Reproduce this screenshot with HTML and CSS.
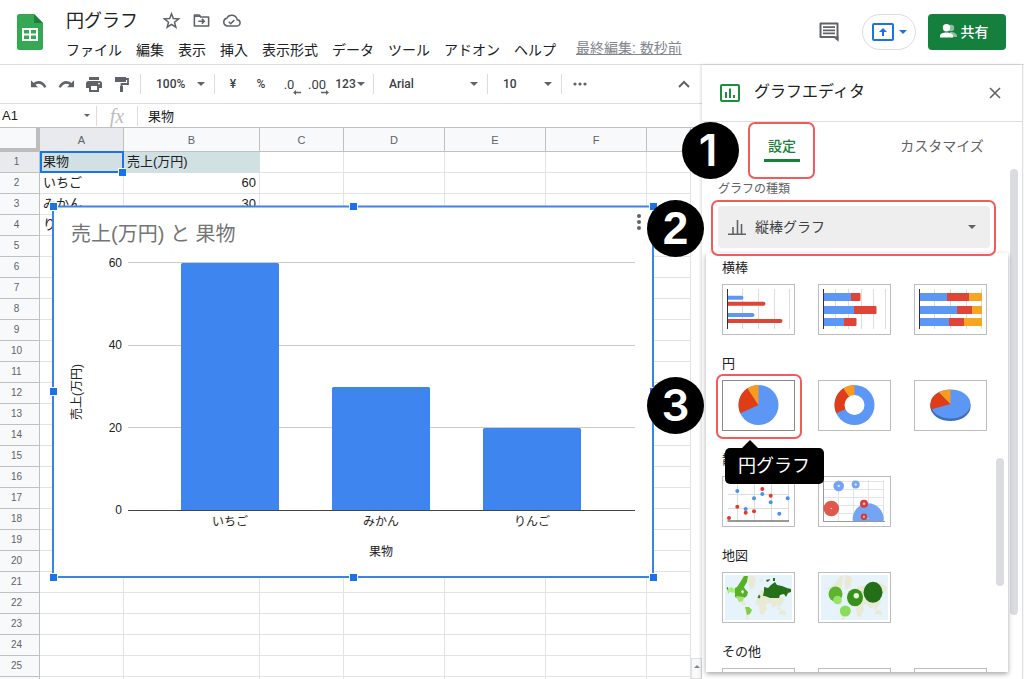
FILE: index.html
```html
<!DOCTYPE html>
<html lang="ja">
<head>
<meta charset="utf-8">
<title>円グラフ</title>
<meta name="viewport" content="width=device-width, initial-scale=1">
<link rel="stylesheet" href="styles.css">
</head>
<body>
<header class="app-header">
  <svg class="logo" viewBox="0 0 26 36" width="26" height="36" aria-hidden="true">
    <path d="M2.500 0H17l9 9v24.500a2.500 2.500 0 0 1-2.500 2.500h-21A2.500 2.500 0 0 1 0 33.500v-31A2.500 2.500 0 0 1 2.500 0z" fill="#34a853"/>
    <path d="M17 0l9 9h-9z" fill="#188038"/>
    <path d="M5 14h16v13H5z" fill="#fff"/>
    <path d="M7 16h5v3.500H7zM14 16h5v3.500h-5zM7 21.500h5V25H7zM14 21.500h5V25h-5z" fill="#34a853"/>
  </svg>
  <div class="doc">
    <div class="doc-top">
      <h1 class="doc-title">円グラフ</h1>
      <button class="icon-btn" aria-label="スター"><svg viewBox="0 0 24 24" width="19" height="19"><path d="M12 3.500l2.300 6 6.700.4-5.200 4.200 1.700 6.400L12 16.900l-5.500 3.600 1.700-6.400L3 9.900l6.700-.4z" fill="none" stroke="#5f6368" stroke-width="1.900" stroke-linejoin="miter"/></svg></button>
      <button class="icon-btn" aria-label="移動"><svg viewBox="0 0 24 24" width="19" height="19" fill="none" stroke="#5f6368" stroke-width="2"><path d="M3 5h6l2 2.500h10V19H3z" stroke-linejoin="round"/><path d="M3 6.500h8" /><path d="M8 13h7M12.500 10l3 3-3 3"/></svg></button>
      <button class="icon-btn" aria-label="保存状態"><svg viewBox="0 0 24 24" width="19" height="19" fill="none" stroke="#5f6368" stroke-width="1.900"><path d="M6.500 19h12a4 4 0 0 0 .6-8A7 7 0 0 0 6 9.200 5 5 0 0 0 6.500 19z"/><path d="M8.500 13.500l2.500 2.500 4.500-4.500"/></svg></button>
    </div>
    <nav class="menus">
      <button>ファイル</button><button>編集</button><button>表示</button><button>挿入</button><button>表示形式</button><button>データ</button><button>ツール</button><button>アドオン</button><button>ヘルプ</button>
      <a class="last-edit" href="#">最終編集: 数秒前</a>
    </nav>
  </div>
  <div class="header-actions">
    <button class="comment-btn" aria-label="コメント"><svg viewBox="0 0 20 20" width="20" height="20"><path d="M1.500 1.500h17v16l-3-2.500h-14z" fill="none" stroke="#5f6368" stroke-width="2" stroke-linejoin="round"/><path d="M15 14.500h4.500V20z" fill="#5f6368"/><path d="M4 5.200h12M4 8.300h12M4 11.400h12" stroke="#5f6368" stroke-width="1.800"/></svg></button>
    <button class="present-btn caret" aria-label="画面共有"><svg viewBox="0 0 22 18" width="22" height="18"><rect x="1" y="1" width="20" height="16" rx="1" fill="none" stroke="#1a73e8" stroke-width="2"/><path d="M11 5l4 4h-3v4h-2V9H7z" fill="#1a73e8"/></svg></button>
    <button class="share-btn"><svg viewBox="0 0 17 14" width="17" height="14"><g fill="#8bc29e"><circle cx="11" cy="4" r="3.200"/><path d="M10 8c4 0 7 1.500 7 4v1h-6z"/></g><g fill="#fff"><circle cx="6.500" cy="3.700" r="3.700"/><path d="M0 13.500v-1.800C0 9.500 3.500 8.500 6.500 8.500s6.500 1 6.500 3.200v1.800z"/></g></svg>共有</button>
  </div>
</header>

<main class="workspace">
  <section class="editor">
    <div class="toolbar">
      <button class="tool" aria-label="元に戻す"><svg viewBox="0 0 18 12" width="17" height="12"><path d="M1 2v7.500h7.500L5.800 6.800C8.500 4.800 12.800 5.500 15 10l2.400-.9C14.500 2.500 8 1.200 4 5z" fill="#5f6368"/></svg></button>
      <button class="tool" aria-label="やり直し"><svg viewBox="0 0 18 12" width="17" height="12"><path d="M17 2v7.500H9.500l2.700-2.700C9.500 4.800 5.200 5.500 3 10L.6 9.100C3.500 2.500 10 1.200 14 5z" fill="#5f6368"/></svg></button>
      <button class="tool" aria-label="印刷"><svg viewBox="0 0 16 15" width="16" height="15" fill="#5f6368"><path d="M3 0h10v3H3z"/><path fill-rule="evenodd" d="M2.500 4h11A2.500 2.500 0 0 1 16 6.500V11h-3v4H3v-4H0V6.500A2.500 2.500 0 0 1 2.500 4zM5 9v4h6V9zM13 5.700a.9.9 0 1 0 0 1.800.9.9 0 0 0 0-1.800z"/></svg></button>
      <button class="tool" aria-label="書式を貼り付け"><svg viewBox="0 0 14 15" width="14" height="15"><path d="M0 0h11v5H0z" fill="#5f6368"/><path d="M11 2h2v5H6.500v3" fill="none" stroke="#5f6368" stroke-width="1.800"/><path d="M5 9h3v6H5z" fill="#5f6368"/></svg></button>
      <span class="sep"></span>
      <label class="pick pick-narrow caret"><select aria-label="ズーム"><option>100%</option></select></label>
      <span class="sep"></span>
      <button class="tool">¥</button>
      <button class="tool">%</button>
      <button class="tool tool-dec" aria-label="小数点以下の桁数を減らす">.0<svg class="dec-arrow" viewBox="0 0 8 5" width="8" height="5"><path d="M3 0v1.800h5v1.400H3V5L0 2.500z" fill="#5f6368"/></svg></button>
      <button class="tool tool-dec" aria-label="小数点以下の桁数を増やす">.00<svg class="dec-arrow" viewBox="0 0 8 5" width="8" height="5"><path d="M5 0v1.800H0v1.400h5V5l3-2.500z" fill="#5f6368"/></svg></button>
      <button class="tool tool-format caret">123</button>
      <span class="sep"></span>
      <label class="pick pick-wide caret"><select aria-label="フォント"><option>Arial</option></select></label>
      <span class="sep"></span>
      <label class="pick pick-narrow caret"><select aria-label="フォントサイズ"><option>10</option></select></label>
      <span class="sep"></span>
      <button class="tool" aria-label="その他"><svg viewBox="0 0 14 4" width="14" height="4" fill="#5f6368"><circle cx="2" cy="2" r="1.600"/><circle cx="7" cy="2" r="1.600"/><circle cx="12" cy="2" r="1.600"/></svg></button>
      <button class="tool tool-end" aria-label="メニューを非表示"><svg viewBox="0 0 12 8" width="12" height="8"><path d="M1 7l5-5 5 5" fill="none" stroke="#5f6368" stroke-width="2"/></svg></button>
    </div>

    <div class="formula-bar">
      <label class="name-box caret"><input type="text" value="A1" aria-label="名前ボックス"></label>
      <span class="fx">fx</span>
      <input class="formula" type="text" value="果物" aria-label="数式">
    </div>

    <div class="sheet">
      <div class="grid-wrap">
        <table class="grid">
          <colgroup><col class="c-num"><col class="c-s"><col class="c-b"><col class="c-s"><col class="c-m"><col class="c-m"><col class="c-m"><col></colgroup>
          <thead><tr><th class="corner"></th><th class="on">A</th><th>B</th><th>C</th><th>D</th><th>E</th><th>F</th><th></th></tr></thead>
          <tbody>
            <tr><th class="on">1</th><td class="head active">果物</td><td class="head">売上(万円)</td><td></td><td></td><td></td><td></td><td></td></tr>
            <tr><th>2</th><td>いちご</td><td class="num">60</td><td></td><td></td><td></td><td></td><td></td></tr>
            <tr><th>3</th><td>みかん</td><td class="num">30</td><td></td><td></td><td></td><td></td><td></td></tr>
            <tr><th>4</th><td>りんご</td><td class="num">20</td><td></td><td></td><td></td><td></td><td></td></tr>
            <tr><th>5</th><td></td><td></td><td></td><td></td><td></td><td></td><td></td></tr>
            <tr><th>6</th><td></td><td></td><td></td><td></td><td></td><td></td><td></td></tr>
            <tr><th>7</th><td></td><td></td><td></td><td></td><td></td><td></td><td></td></tr>
            <tr><th>8</th><td></td><td></td><td></td><td></td><td></td><td></td><td></td></tr>
            <tr><th>9</th><td></td><td></td><td></td><td></td><td></td><td></td><td></td></tr>
            <tr><th>10</th><td></td><td></td><td></td><td></td><td></td><td></td><td></td></tr>
            <tr><th>11</th><td></td><td></td><td></td><td></td><td></td><td></td><td></td></tr>
            <tr><th>12</th><td></td><td></td><td></td><td></td><td></td><td></td><td></td></tr>
            <tr><th>13</th><td></td><td></td><td></td><td></td><td></td><td></td><td></td></tr>
            <tr><th>14</th><td></td><td></td><td></td><td></td><td></td><td></td><td></td></tr>
            <tr><th>15</th><td></td><td></td><td></td><td></td><td></td><td></td><td></td></tr>
            <tr><th>16</th><td></td><td></td><td></td><td></td><td></td><td></td><td></td></tr>
            <tr><th>17</th><td></td><td></td><td></td><td></td><td></td><td></td><td></td></tr>
            <tr><th>18</th><td></td><td></td><td></td><td></td><td></td><td></td><td></td></tr>
            <tr><th>19</th><td></td><td></td><td></td><td></td><td></td><td></td><td></td></tr>
            <tr><th>20</th><td></td><td></td><td></td><td></td><td></td><td></td><td></td></tr>
            <tr><th>21</th><td></td><td></td><td></td><td></td><td></td><td></td><td></td></tr>
            <tr><th>22</th><td></td><td></td><td></td><td></td><td></td><td></td><td></td></tr>
            <tr><th>23</th><td></td><td></td><td></td><td></td><td></td><td></td><td></td></tr>
            <tr><th>24</th><td></td><td></td><td></td><td></td><td></td><td></td><td></td></tr>
            <tr><th>25</th><td></td><td></td><td></td><td></td><td></td><td></td><td></td></tr>
            <tr><th></th><td></td><td></td><td></td><td></td><td></td><td></td><td></td></tr>
          </tbody>
        </table>
      </div>
      <div class="sheet-scroll"><button class="scroll-up" aria-label="上へ"></button></div>

      <svg class="chart" viewBox="48 202 610 380" width="610" height="380" role="img" aria-label="売上(万円) と 果物">
        <rect x="53" y="206.500" width="600" height="370.500" fill="#fff" stroke="#3b83e6" stroke-width="2"/>
        <text class="chart-title" x="71" y="241">売上(万円) と 果物</text>
        <g fill="#5f6368"><circle cx="639" cy="216" r="2"/><circle cx="639" cy="222" r="2"/><circle cx="639" cy="228" r="2"/></g>
        <path d="M128 262.500H635M128 345.500H635M128 427.500H635" stroke="#ccc"/>
        <g fill="#3f85f0"><path d="M181 510V264.500q0-1.500 1.500-1.500h95q1.500 0 1.500 1.500V510z"/><path d="M332 510V388.500q0-1.500 1.500-1.500h95q1.500 0 1.500 1.500V510z"/><path d="M483 510V429.500q0-1.500 1.500-1.500h95q1.500 0 1.500 1.500V510z"/></g>
        <path d="M128 510.500H635" stroke="#444"/>
        <g class="axis axis-y"><text x="122" y="267">60</text><text x="122" y="349">40</text><text x="122" y="432">20</text><text x="122" y="514">0</text></g>
        <g class="axis axis-x"><text x="230" y="526">いちご</text><text x="381" y="526">みかん</text><text x="532" y="526">りんご</text><text x="381" y="556">果物</text><text transform="translate(81 392) rotate(-90)">売上(万円)</text></g>
        <g fill="#1a73e8" stroke="#fff"><path d="M49.500 202.500h8v8h-8zM349.500 202.500h8v8h-8zM649.500 202.500h8v8h-8zM49.500 387.500h8v8h-8zM649.500 387.500h8v8h-8zM49.500 573.500h8v8h-8zM349.500 573.500h8v8h-8zM649.500 573.500h8v8h-8z"/></g>
      </svg>
    </div>
  </section>

  <aside class="panel">
    <div class="panel-head">
      <svg viewBox="0 0 20 18" width="20" height="18"><rect x="1" y="1" width="18" height="16" rx="1" fill="none" stroke="#1e8e3e" stroke-width="2"/><path d="M6 8v6M10 4.500V14M14 11v3" stroke="#1e8e3e" stroke-width="2"/></svg>
      <h2>グラフエディタ</h2>
      <button class="close-btn" aria-label="閉じる"><svg viewBox="0 0 12 12" width="12" height="12"><path d="M1 1l10 10M11 1L1 11" stroke="#5f6368" stroke-width="1.600"/></svg></button>
    </div>
    <div class="tabs">
      <button class="tab tab-on"><span>設定</span></button>
      <button class="tab"><span>カスタマイズ</span></button>
      <i class="mark mark-tab"></i>
    </div>
    <div class="panel-body">
      <label class="field-label" for="chart-type">グラフの種類</label>
      <div class="type-select caret">
        <svg class="type-icon" viewBox="0 0 18 16" width="18" height="16"><path d="M0 15.200h18M5 8v7M9.500 1v14M13.500 5v10" stroke="#5f6368" stroke-width="1.600" fill="none"/></svg>
        <select id="chart-type"><option>縦棒グラフ</option></select>
        <i class="mark mark-type"></i>
      </div>
    </div>
    <i class="panel-thumb"></i>

    <div class="type-menu-wrap">
      <div class="type-menu">
        <section class="group"><h3>横棒</h3><div class="thumbs">
          <button class="thumb" aria-label="横棒グラフ"><svg viewBox="1 1 71 49"><path d="M20.500 5v40M36.500 5v40M52.500 5v40M67.500 5v40" stroke="#ddd"/><path d="M5 11.700h14.500a2 2 0 0 1 0 4H5zM5 29h25.500a2 2 0 0 1 0 4H5z" fill="#5c97f5"/><path d="M5 17.700h36.500a2 2 0 0 1 0 4H5zM5 35h53.500a2 2 0 0 1 0 4H5z" fill="#e04436"/><path d="M5.500 5v40" stroke="#333"/></svg></button>
          <button class="thumb" aria-label="積み上げ横棒グラフ"><svg viewBox="1 1 71 49"><path d="M17.500 5v40M30.500 5v40M43.500 5v40M55.500 5v40M67.500 5v40" stroke="#ddd"/><path d="M5 9h28v8H5zM5 22h31v8H5zM5 34h21v8H5z" fill="#5c97f5"/><path d="M33 9h8.500q1 0 1 1v6q0 1-1 1H33zM36 22h21.500q1 0 1 1v6q0 1-1 1H36zM26 34h11.500q1 0 1 1v6q0 1-1 1H26z" fill="#e04436"/><path d="M5.500 5v40" stroke="#333"/></svg></button>
          <button class="thumb" aria-label="100% 積み上げ横棒グラフ"><svg viewBox="1 1 71 49"><path d="M20.500 5v40M36.500 5v40M52.500 5v40M67.500 5v40" stroke="#ddd"/><path d="M5 9h28v8H5zM5 22h38v8H5zM5 34h30v8H5z" fill="#5c97f5"/><path d="M33 9h22v8H33zM43 22h15v8H43zM35 34h15v8H35z" fill="#e04436"/><path d="M55 9h13v8H55zM58 22h10v8H58zM50 34h18v8H50z" fill="#f5a623"/><path d="M5.500 5v40" stroke="#333"/></svg></button>
        </div></section>
        <section class="group"><h3>円</h3><div class="thumbs">
          <button class="thumb thumb-hover" aria-label="円グラフ"><svg viewBox="1 1 71 49"><circle cx="36.500" cy="25" r="20" fill="#5c97f5"/><path d="M36.500 25L18.300 33.200A20 20 0 0 1 25.500 8.300z" fill="#e03c16"/><path d="M36.500 25L25.500 8.300A20 20 0 0 1 36.500 5z" fill="#fb9a1c"/></svg></button>
          <button class="thumb" aria-label="ドーナツグラフ"><svg viewBox="1 1 71 49"><circle cx="36.500" cy="25" r="20" fill="#5c97f5"/><path d="M36.500 25L18.300 33.200A20 20 0 0 1 25.500 8.300z" fill="#e03c16"/><path d="M36.500 25L25.500 8.300A20 20 0 0 1 36.500 5z" fill="#fb9a1c"/><circle cx="36.500" cy="25" r="10" fill="#fff"/></svg></button>
          <button class="thumb" aria-label="3D 円グラフ"><svg viewBox="1 1 71 49"><path d="M16.500 24v3a20 14 0 0 0 40 0v-3z" fill="#3f6fb8"/><path d="M16.500 24v3q.3 2 1.500 4l2-3z" fill="#a32c10"/><ellipse cx="36.500" cy="24" rx="20" ry="14.500" fill="#5c97f5"/><path d="M36.500 24L17.700 29.200A20 14.500 0 0 1 25 12.200z" fill="#e03c16"/><path d="M36.500 24L25 12.200A20 14.500 0 0 1 36.500 9.500z" fill="#fb9a1c"/></svg></button>
        </div><i class="mark mark-pie"></i><span class="tooltip" role="tooltip">円グラフ</span></section>
        <section class="group"><h3>散布</h3><div class="thumbs">
          <button class="thumb" aria-label="散布図"><svg viewBox="1 1 71 49"><path d="M15.500 4v41M32.500 4v41M49.500 4v41M66.500 4v41M6 18.500h61M6 32.500h61" stroke="#ddd"/><path d="M5.500 45h61.500" stroke="#333"/><g fill="#4a90f5"><circle cx="15.300" cy="15" r="2"/><circle cx="32" cy="22.300" r="2"/><circle cx="40.300" cy="18" r="2"/><circle cx="23.700" cy="33" r="2"/><circle cx="48.700" cy="26.300" r="2"/><circle cx="65.700" cy="22.300" r="2"/><circle cx="57.300" cy="37.700" r="2"/></g><g fill="#e33a2c"><circle cx="7" cy="42" r="2"/><circle cx="15.300" cy="30.700" r="2"/><circle cx="23.700" cy="36.700" r="2"/><circle cx="32" cy="35.300" r="2"/><circle cx="40.300" cy="13" r="2"/><circle cx="48.700" cy="19.700" r="2"/></g></svg></button>
          <button class="thumb" aria-label="バブルチャート"><svg viewBox="1 1 71 49"><path d="M20.500 4v41M35.500 4v41M50.500 4v41M65.500 4v41M5 5.500h61M5 13.500h61M5 21.500h61M5 29.500h61M5 37.500h61" stroke="#e4e4e4"/><path d="M5.500 4v41M5 45.500h62" stroke="#999" fill="none"/><path d="M34.800 45a15.500 15.500 0 1 1 30.700 0z" fill="#74a5f5"/><g fill="#74a5f5"><circle cx="20.700" cy="10" r="5.300"/><circle cx="37.700" cy="8.500" r="4"/></g><circle cx="13.300" cy="32.500" r="7.800" fill="#e0584c"/><g fill="#d83b3b"><circle cx="46" cy="27.700" r="4"/><circle cx="46" cy="40.700" r="3.200"/></g><g fill="#fff" opacity=".7"><circle cx="20.700" cy="10" r="1.200"/><circle cx="37.700" cy="8.500" r="1.200"/><circle cx="13.300" cy="32.500" r=".8"/><circle cx="46" cy="27.700" r="1.300"/><circle cx="46" cy="40.700" r="1"/><circle cx="50" cy="42.500" r=".6"/></g></svg></button>
        </div></section>
        <section class="group"><h3>地図</h3><div class="thumbs">
          <button class="thumb" aria-label="マップチャート"><svg viewBox="1 1 71 49"><path d="M3 3h67v45H3z" fill="#e6f3fb"/><g fill="#e9ead5"><path d="M27 4l3-1 4 3-1 8-4 4-3-6z"/><path d="M15 28l8 1 1 5-4-1z"/><path d="M24 37l3 3-1 8h-2z"/><path d="M36 23l3-5 4 0 1 5 5 2 12 0 1 4-5 7-2-3-4 3-3-5-4 1 1 5-4 6-3-1-1-8-4-2z"/><path d="M55 35l6 3-1 1-5-2zM57 40l5-2 2 2v3l-7-1z"/><path d="M37 8l3-1 1 2-3 1z"/></g><path d="M5 17l4-2 4 2v4l-5-1-2 2z" fill="#a8ee77"/><path d="M13 16l2-1 4-6 3-5 4 0-1 6-3 5 1 2 3 3-1 4-3 2-5 1-4-2z" fill="#56b127"/><path d="M14 24l8 1-1 4-4 1z" fill="#a4e477"/><path d="M23 35l4 0 3 3-2 4-3 1z" fill="#7fd045"/><path d="M20 18l2 1-1 3-2-2z" fill="#eef8e8"/><path d="M35.500 25.500l1.500-3 1.500 2-1 2zM4.500 16l1.500-1v3z" fill="#2e7d1a"/><path d="M41 24l1-5 0-4 4 1 3-3 4-3 2 3 5 1 5 2 4 1 0 3-3 1-2 4-2-3-4 1-1 3-4 0-5 0-5-2zM44 8l4-1-1 2-2 1zM51 6l2 0 0 3-2 0z" fill="#27701a"/></svg></button>
          <button class="thumb" aria-label="マーカー付きマップチャート"><svg viewBox="1 1 71 49"><path d="M3 3h67v45H3z" fill="#e6f3fb"/><g fill="#e9ead5"><path d="M27 4l3-1 4 3-1 8-4 4-3-6zM5 17l8-2 6-6 3-5h3l-1 10-3 10-6-1-3-6z"/><path d="M15 27l8 1 1 5-4-1zM24 36l3 3-1 9h-2z"/><path d="M35 25l4-10 10-2 12-3 8 5-1 4-6 7 1 5-5 6-2-3-4 3-3-5-4 1 1 5-4 7-3-1-1-9-4-2z"/><path d="M55 35l6 3-1 1-5-2zM57 40l5-2 2 2v3l-7-1z"/></g><ellipse cx="17.500" cy="22" rx="7" ry="7.500" fill="#5db52f"/><circle cx="19.500" cy="28" r="4.300" fill="#97e36a"/><circle cx="27.300" cy="39" r="5.500" fill="#8add58"/><ellipse cx="37" cy="25.500" rx="8" ry="8.700" fill="#39901c"/><circle cx="38.300" cy="23.700" r="2.700" fill="#e4f8d9"/><ellipse cx="55" cy="20.300" rx="9.500" ry="10.500" fill="#226f18"/></svg></button>
        </div></section>
        <section class="group"><h3>その他</h3><div class="thumbs">
          <button class="thumb" aria-label="ウォーターフォール"></button><button class="thumb" aria-label="ヒストグラム"></button><button class="thumb" aria-label="レーダーチャート"></button>
        </div></section>
        <i class="menu-thumb"></i>
      </div>
    </div>

    <b class="badge badge-1">1</b>
    <b class="badge badge-2">2</b>
    <b class="badge badge-3">3</b>
  </aside>
</main>
</body>
</html>
```
FILE: styles.css
```css
* { box-sizing: border-box; }

body {
  margin: 0;
  height: 100vh;
  overflow: hidden;
  display: flex;
  flex-direction: column;
  background: #fff;
  color: #202124;
  font-family: "Liberation Sans", "Noto Sans CJK JP", sans-serif;
  font-size: 14px;
}

button, input, select {
  font: inherit;
  color: inherit;
  border: 0;
  padding: 0;
  margin: 0;
  background: none;
  outline: none;
}

select { appearance: none; }
h1, h2, h3 { margin: 0; font-weight: 400; }
svg { display: block; flex: none; }

/* small drop-down triangle at the end of a control */
.caret { display: flex; align-items: center; }
.caret::after {
  content: "";
  flex: none;
  border: 4px solid transparent;
  border-top-color: #5f6368;
  border-bottom: 0;
}

/* header */
.app-header {
  flex: none;
  display: flex;
  align-items: flex-start;
  height: 65px;
  padding: 0 18px 0 17px;
  border-bottom: 1px solid #dadce0;
}
.logo { margin-top: 14px; }
.doc { margin-left: 23px; padding-top: 7px; }
.doc-top { display: flex; align-items: center; height: 27px; }
.doc-title { font-size: 18px; line-height: 26px; margin-right: 18px; }
.icon-btn { width: 30px; height: 28px; display: grid; place-items: center; }
.menus { display: flex; gap: 14px; align-items: center; height: 30px; white-space: nowrap; }
.last-edit { margin: 0 0 5px 6px; color: #80868b; }
.header-actions { margin-left: auto; padding-top: 14px; display: flex; align-items: center; }
.comment-btn { margin-right: 23px; }
.present-btn {
  width: 54px;
  height: 36px;
  margin-right: 12px;
  justify-content: center;
  gap: 5px;
  border: 1px solid #dadce0;
  border-radius: 18px;
}
.present-btn::after { border-top-color: #1a73e8; }
.share-btn {
  display: flex;
  align-items: center;
  justify-content: center;
  gap: 4px;
  width: 78px;
  height: 36px;
  padding: 0 6px 2px 0;
  border-radius: 4px;
  background: #15803d;
  color: #fff;
  font-weight: 500;
}

/* workspace */
.workspace { flex: 1; min-height: 0; display: flex; }
.editor { flex: 1; min-width: 0; display: flex; flex-direction: column; }

.toolbar {
  flex: none;
  display: flex;
  align-items: center;
  height: 39px;
  padding: 0 4px 0 24px;
  border-bottom: 1px solid #dadce0;
  font-family: Roboto, "Noto Sans CJK JP", sans-serif;
  font-size: 12px;
  font-weight: 500;
  color: #3c4043;
}
.tool { flex: none; width: 28px; height: 28px; display: flex; align-items: center; justify-content: center; }
.tool-dec { position: relative; font-size: 13px; font-weight: 400; }
.dec-arrow { position: absolute; right: 2px; bottom: 3px; }
.tool-format { width: 38px; gap: 1px; }
.tool-end { margin-left: auto; }
.sep { flex: none; width: 1px; height: 20px; margin: 0 4px; background: #dadce0; }
.pick { flex: none; padding: 0 5px 0 11px; }
.pick select { flex: 1; min-width: 0; }
.pick-narrow { width: 65px; }
.pick-wide { width: 105px; }

.formula-bar {
  flex: none;
  display: flex;
  align-items: center;
  height: 24px;
  border-bottom: 1px solid #c0c0c0;
  font-size: 13px;
}
.name-box { width: 97px; height: 20px; padding: 0 6px 0 2px; border-right: 1px solid #dadce0; }
.name-box input { flex: 1; min-width: 0; }
.name-box::after { border-width: 3px; border-bottom: 0; }
.fx {
  width: 41px;
  border-right: 1px solid #dadce0;
  text-align: center;
  font: italic 20px/20px "Liberation Serif", serif;
  color: #bdbdbd;
}
.formula { flex: 1; min-width: 0; padding-left: 10px; }

/* sheet */
.sheet { flex: 1; min-height: 0; display: flex; position: relative; overflow: hidden; }
.grid-wrap { flex: 1; min-width: 0; overflow: hidden; }
.grid { width: 100%; table-layout: fixed; border-collapse: separate; border-spacing: 0; }
.c-num { width: 40px; }
.c-s { width: 84px; }
.c-b { width: 136px; }
.c-m { width: 101px; }
.grid th, .grid td {
  height: 21px;
  padding: 0 3px;
  border: solid #e2e3e3;
  border-width: 0 1px 1px 0;
  font-size: 13px;
  line-height: 20px;
  white-space: nowrap;
  text-align: left;
}
.grid th {
  padding-right: 9px;
  border-color: #c0c0c0;
  background: #f8f9fa;
  color: #5f6368;
  font-size: 10px;
  font-weight: 400;
  text-align: center;
}
.grid thead th { height: 24px; padding: 0; font-size: 11px; }
.grid .corner { border-color: #bdbdbd; border-width: 0 4px 4px 0; }
.grid .on { background: #e8eaed; }
.grid .num { text-align: right; }
.grid .head { background: #d0e0e3; border-color: #d0e0e3; }
.grid .active { position: relative; }
.active::before {
  content: "";
  position: absolute;
  inset: -1px -1px -1px 0;
  border: 2px solid #1a73e8;
}
.active::after {
  content: "";
  position: absolute;
  right: -3px;
  bottom: -4px;
  width: 7px;
  height: 7px;
  background: #1a73e8;
  border: solid #fff;
  border-width: 1px 0 0 1px;
}
.sheet-scroll { flex: none; width: 11px; display: flex; align-items: flex-end; }
.scroll-up {
  width: 11px;
  height: 21px;
  padding-bottom: 4px;
  border: 1px solid #e0e0e0;
  display: grid;
  place-items: center;
  background: #f8f9fa;
}
.scroll-up::before { content: ""; border: 3px solid transparent; border-bottom-color: #80868b; border-top: 0; }

.chart { position: absolute; left: 48px; top: 74px; }
.chart-title { font-size: 20px; fill: #757575; }
.axis { font-size: 12px; fill: #222; }
.axis-y { text-anchor: end; }
.axis-x { text-anchor: middle; }

/* chart editor panel */
.panel {
  flex: none;
  width: 321px;
  margin-right: 1px;
  position: relative;
  display: flex;
  flex-direction: column;
  background: #fff;
  border-right: 1px solid #dadce0;
  box-shadow: -1px 0 3px rgba(60, 64, 67, .2);
}
.panel-head { display: flex; align-items: center; height: 57px; padding: 0 21px 0 18px; border-bottom: 1px solid #e0e0e0; }
.panel-head h2 { margin-left: 14px; font-size: 16px; line-height: 24px; padding-bottom: 2px; }
.close-btn { margin-left: auto; }
.tabs { display: flex; position: relative; height: 58px; }
.tab { flex: 1; display: flex; justify-content: center; align-items: flex-start; padding-top: 14px; color: #5f6368; }
.tab span { padding: 0 4px 3px; line-height: 20px; border-bottom: 3px solid transparent; }
.tab-on { color: #188038; font-weight: 500; }
.tab-on span { border-bottom-color: #188038; }
.panel-body { padding: 0 32px 0 16px; }
.field-label { display: block; height: 26px; line-height: 18px; font-size: 12px; color: #5f6368; }
.type-select { position: relative; height: 42px; padding: 0 14px 0 10px; border-radius: 4px; background: #eee; }
.type-select select { flex: 1; margin-left: 9px; color: #3c4043; }
.panel-thumb { position: absolute; right: 4px; top: 104px; width: 8px; height: 446px; border-radius: 4px; background: #dadce0; }

/* type menu */
.type-menu-wrap {
  position: absolute;
  left: 4px;
  right: 14px;
  top: 188px;
  bottom: 7px;
  background: #fff;
  box-shadow: 0 2px 5px rgba(0, 0, 0, .35);
}
.type-menu { position: relative; height: 100%; padding: 5px 16px 0; overflow: hidden; }
.group { position: relative; height: 96px; }
.group h3 { height: 26px; line-height: 20px; font-size: 13px; }
.thumbs { display: flex; gap: 23px; }
.thumb { width: 73px; height: 51px; border: 1px solid #bdbdbd; background: #fff; }
.thumb-hover { border-color: #8a8a8a; }
.menu-thumb { position: absolute; right: 4px; top: 205px; width: 8px; height: 128px; border-radius: 4px; background: #dadce0; }
.tooltip {
  position: absolute;
  z-index: 2;
  left: 3px;
  top: 94px;
  padding: 0 14px 0 13px;
  border-radius: 5px;
  background: #000;
  color: #fff;
  font-size: 18px;
  line-height: 36px;
}
.tooltip::before {
  content: "";
  position: absolute;
  left: 17px;
  top: -8px;
  border: 8px solid transparent;
  border-bottom-color: #000;
  border-top: 0;
}

/* numbered guide marks */
.mark { position: absolute; border: 2px solid #f15b5b; border-radius: 7px; pointer-events: none; }
.mark-tab { left: 46px; top: 0; width: 67px; height: 57px; }
.mark-type { inset: -6px -6px -8px -7px; z-index: 3; }
.mark-pie { left: -6px; top: 20px; width: 86px; height: 65px; }
.badge {
  position: absolute;
  z-index: 4;
  width: 57px;
  height: 57px;
  border-radius: 50%;
  background: #000;
  color: #fff;
  text-align: center;
  font: 600 44px/57px Inter, sans-serif;
}
.badge-1 { left: -20px; top: 57px; padding-right: 5px; }
.badge-2 { left: -55px; top: 135px; font: 700 46px/57px "Liberation Sans", sans-serif; }
.badge-3 { left: -55px; top: 312px; }
```
